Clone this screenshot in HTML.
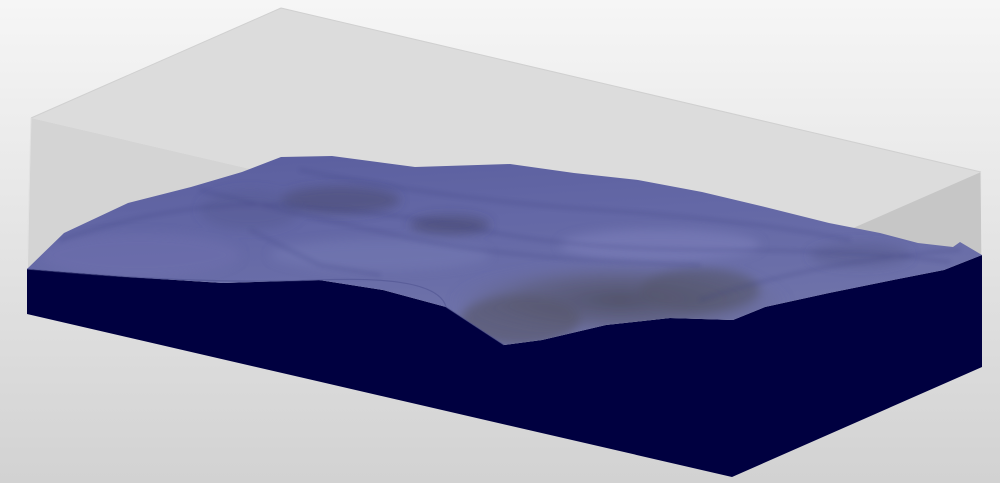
<!DOCTYPE html>
<html><head><meta charset="utf-8"><style>
html,body{margin:0;padding:0;width:1000px;height:483px;overflow:hidden}
svg{display:block}
</style></head><body>
<svg width="1000" height="483" viewBox="0 0 1000 483" xmlns="http://www.w3.org/2000/svg">
<defs>
<linearGradient id="bg" x1="0" y1="0" x2="0" y2="1">
<stop offset="0" stop-color="#f6f6f6"/><stop offset="1" stop-color="#d2d2d2"/>
</linearGradient>
<linearGradient id="ter" x1="0" y1="0" x2="0.3" y2="1">
<stop offset="0" stop-color="#5a5e9e"/><stop offset="0.45" stop-color="#6468a6"/><stop offset="1" stop-color="#7074aa"/>
</linearGradient>
<radialGradient id="gray" cx="0.5" cy="0.5" r="0.5">
<stop offset="0" stop-color="#4f5066" stop-opacity="0.95"/><stop offset="0.6" stop-color="#5a5b74" stop-opacity="0.6"/><stop offset="1" stop-color="#6a6c98" stop-opacity="0"/>
</radialGradient>
<filter id="bl"><feGaussianBlur stdDeviation="5"/></filter>
<filter id="bl2"><feGaussianBlur stdDeviation="2"/></filter>
<clipPath id="tc"><polygon points="27,269 64,233 128,203 191,187 242,172 281,157 332,156 415,167 510,164 574,173 638,180 702,192 765,207 829,223 880,233 918,243 953,247 960,242 982,255 944,270 893,280 829,293 765,307 733,320 670,318 606,325 542,340 504,345 446,307 383,290 319,280 223,283 128,277"/></clipPath>
</defs>
<rect width="1000" height="483" fill="url(#bg)"/>
<!-- box faces -->
<polygon points="281,8 981,172 732,281 31,118" fill="#dcdcdc"/>
<polygon points="31,118 732,281 732,477 27,314" fill="#d4d4d4"/>
<polygon points="981,172 732,281 732,477 982,367" fill="#c6c6c6"/>
<line x1="31" y1="118" x2="281" y2="8" stroke="#d0d0d0"/>
<line x1="281" y1="8" x2="981" y2="172" stroke="#d0d0d0"/>
<line x1="981" y1="172" x2="982" y2="257" stroke="#e6e6e6"/>
<line x1="31" y1="118" x2="27" y2="269" stroke="#e2e2e2"/>
<!-- navy block -->
<polygon points="27,269 128,277 223,283 319,280 383,290 446,307 504,345 542,340 606,325 670,318 733,320 765,307 829,293 893,280 944,270 982,255 982,367 732,477 27,314" fill="#000040"/>
<!-- terrain -->
<polygon points="27,269 64,233 128,203 191,187 242,172 281,157 332,156 415,167 510,164 574,173 638,180 702,192 765,207 829,223 880,233 918,243 953,247 960,242 982,255 944,270 893,280 829,293 765,307 733,320 670,318 606,325 542,340 504,345 446,307 383,290 319,280 223,283 128,277" fill="url(#ter)"/>
<g clip-path="url(#tc)">
<g filter="url(#bl)">
<ellipse cx="620" cy="300" rx="170" ry="38" fill="url(#gray)"/>
<ellipse cx="520" cy="320" rx="60" ry="25" fill="#58596e" opacity="0.7"/>
<ellipse cx="700" cy="290" rx="60" ry="22" fill="#55566c" opacity="0.6"/>
<ellipse cx="340" cy="200" rx="60" ry="14" fill="#454866" opacity="0.45"/>
<ellipse cx="450" cy="225" rx="40" ry="10" fill="#404060" opacity="0.45"/>
<ellipse cx="660" cy="245" rx="100" ry="16" fill="#8286c0" opacity="0.45"/>
<ellipse cx="380" cy="255" rx="110" ry="16" fill="#7c80ba" opacity="0.35"/>
<ellipse cx="140" cy="255" rx="100" ry="22" fill="#7074ae" opacity="0.4"/>
<ellipse cx="860" cy="255" rx="50" ry="12" fill="#53588a" opacity="0.45"/>
<ellipse cx="250" cy="210" rx="50" ry="20" fill="#55598e" opacity="0.4"/>
</g>
<g filter="url(#bl2)" opacity="0.35" fill="none" stroke="#3c4080" stroke-width="2">
<path d="M60,240 Q180,200 280,205 T480,230 T720,250 T950,262"/>
<path d="M200,190 Q320,220 420,240 T700,265"/>
<path d="M300,170 Q450,200 600,210 T850,240"/>
<path d="M700,300 Q820,260 960,250"/>
<path d="M250,230 L320,265 L380,275"/>
</g>
</g>
<path d="M27,269 Q200,285 319,280 T446,307 L504,345" fill="none" stroke="#4a4e8c" stroke-width="1.2" opacity="0.5"/>
</svg>
</body></html>
